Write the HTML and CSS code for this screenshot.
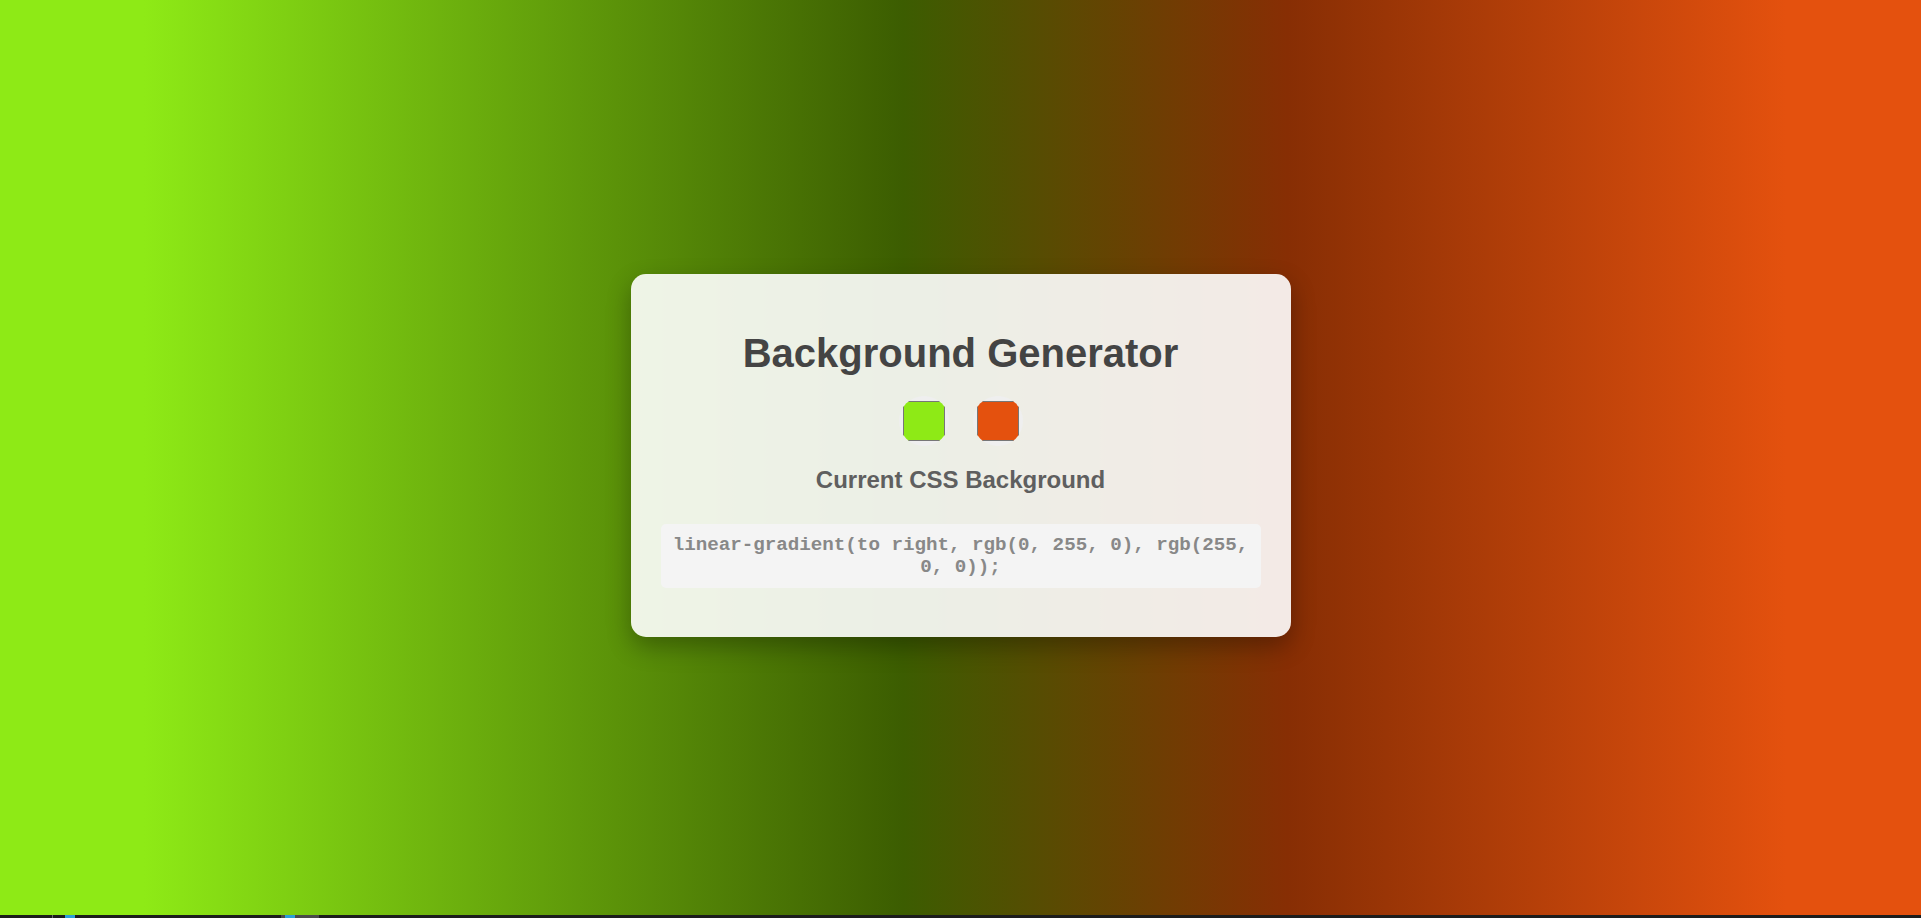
FILE: index.html
```html
<!DOCTYPE html>
<html lang="en">
<head>
<meta charset="utf-8">
<title>Background Generator</title>
<link rel="stylesheet" href="styles.css">
</head>
<body>
<main class="stage">
  <section class="card">
    <h1 class="title">Background Generator</h1>
    <div class="pickers">
      <input class="picker" type="color" value="#8eea16">
      <input class="picker" type="color" value="#e4510e">
    </div>
    <h3 class="label">Current CSS Background</h3>
    <p class="code">linear-gradient(to right, rgb(0, 255, 0), rgb(255, 0, 0));</p>
  </section>
</main>
<footer class="taskbar">
  <span class="tb-mark"></span>
  <span class="tb-blue"></span>
  <span class="tb-app"><span class="tb-app-blue"></span></span>
</footer>
</body>
</html>
```
FILE: styles.css
```css
html, body {
  margin: 0;
  padding: 0;
  height: 100%;
}

body {
  display: flex;
  flex-direction: column;
  font-family: "Liberation Sans", Arial, sans-serif;
  background: linear-gradient(to right,
    #8eea16 0%,
    #8eea16 7.5%,
    #3c5d01 47%,
    #872e04 67%,
    #e4510e 93%,
    #e4510e 100%);
}

.stage {
  flex: 1;
  display: flex;
  align-items: center;
  justify-content: center;
  padding-bottom: 4px;
}

.card {
  box-sizing: border-box;
  width: 660px;
  padding: 30px;
  background: rgba(255, 255, 255, 0.9);
  border-radius: 15px;
  box-shadow: 0 10px 25px rgba(0, 0, 0, 0.3);
  text-align: center;
}

.title {
  margin: 26px 0 20px;
  font-size: 40px;
  font-weight: bold;
  color: #444444;
  line-height: 46px;
}

.pickers {
  display: flex;
  justify-content: center;
  gap: 24px;
  height: 50px;
}

.picker {
  width: 50px;
  height: 50px;
  border: none;
  border-radius: 50%;
  overflow: hidden;
  cursor: pointer;
  margin: 0;
  padding: 1px 2px;
  background-color: #efefef;
}

.picker::-webkit-color-swatch-wrapper {
  padding: 4px 2px;
}

.picker::-webkit-color-swatch {
  border: 1px solid #777777;
  border-radius: 0;
}

.label {
  margin: 20px 0 30px;
  font-size: 24px;
  font-weight: bold;
  color: #5f5f5f;
  line-height: 28px;
}

.code {
  margin: 0 0 19px;
  padding: 10px;
  background: #f4f4f4;
  border-radius: 5px;
  font-family: "Liberation Mono", "Courier New", monospace;
  font-size: 19.2px;
  font-weight: bold;
  line-height: 22px;
  color: #888888;
}

.taskbar {
  height: 3px;
  background: #1c1c1c;
  display: flex;
  align-items: stretch;
}

.tb-mark {
  width: 1px;
  margin-left: 52px;
  background: #6a6a6a;
}

.tb-blue {
  width: 10px;
  margin-left: 12px;
  background: #2b9fd8;
}

.tb-app {
  width: 38px;
  margin-left: 206px;
  background: #4a4a4a;
  display: flex;
}

.tb-app-blue {
  width: 10px;
  margin-left: 4px;
  background: #2b9fd8;
}
```
